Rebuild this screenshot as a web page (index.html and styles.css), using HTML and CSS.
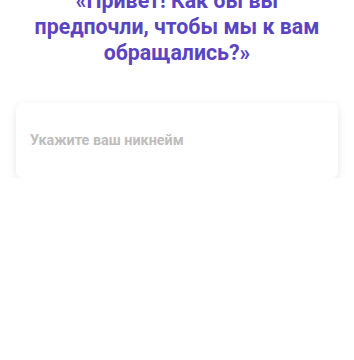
FILE: index.html
```html
<!DOCTYPE html>
<html lang="ru">
<head>
    <meta charset="UTF-8">
    <meta name="viewport" content="width=device-width, initial-scale=1.0">
    <title>Никнейм</title>
    <link rel="stylesheet" href="styles.css">
</head>
<body>
    <div class="container">
        <h1 class="question">«Привет! Как бы вы предпочли, чтобы мы к вам обращались?»</h1>

        <div class="card">
            <input type="text" class="nick-input" placeholder="Укажите ваш никнейм">
        </div>
    </div>
</body>
</html>
```

FILE: styles.css
```css
body {
    font-family: Roboto, "Noto Sans", Arial, sans-serif;
    margin: 0;
    padding: 0;
    background-color: #ffffff;
}
.container {
    padding: 0 16px;
}
.question {
    margin: -12px 14px 0;
    font-size: 21.3px;
    line-height: 26px;
    font-weight: 700;
    color: #5a44c2;
    text-align: center;
}
.card {
    background-color: white;
    border-radius: 6px;
    margin-top: 37px;
    height: 75px;
    padding: 0 14px;
    display: flex;
    align-items: center;
    box-shadow: 0 6px 12px rgba(0,0,0,0.07), 0 0 6px rgba(0,0,0,0.04);
}
.nick-input {
    width: 100%;
    border: none;
    outline: none;
    padding: 0;
    font-family: Roboto, "Noto Sans", Arial, sans-serif;
    font-size: 14.4px;
    font-weight: 700;
    color: #333;
    background: transparent;
}
.nick-input::placeholder {
    color: #bdbdbd;
}
```
